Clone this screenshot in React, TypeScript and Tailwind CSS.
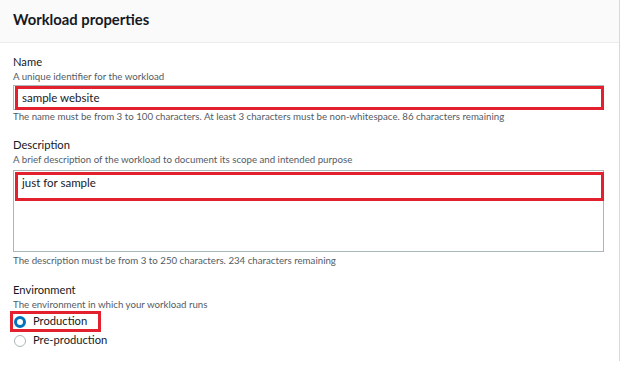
const Radio = ({ checked }: { checked?: boolean }) =>
  checked ? (
    <span className="inline-block h-[12px] w-[12px] rounded-full border-[3.5px] border-[#0073bb] bg-white" />
  ) : (
    <span className="inline-block h-[12px] w-[12px] rounded-full border border-[#aab7b8] bg-white" />
  );

const Hint = ({ children }: { children: React.ReactNode }) => (
  <div className="text-[9.7px] leading-[13px] text-[#545b64]">{children}</div>
);

const Label = ({ children }: { children: React.ReactNode }) => (
  <div className="text-[11.2px] leading-[16px] text-[#16191f]">{children}</div>
);

export default function App() {
  return (
    <div className="h-[387px] w-[621px] bg-white font-['Lato',sans-serif]">
      <div className="h-[361px] w-[620px] border-r border-[#d5dbdb]">
        <div className="flex h-[43px] items-center border-b border-[#eaeded] bg-[#fafafa] px-[13px]">
          <h2 className="pb-[4px] text-[14.8px] font-bold text-[#16191f]">Workload properties</h2>
        </div>

        <div className="px-[13px] pt-[11px]">
          {/* name */}
          <Label>Name</Label>
          <Hint>A unique identifier for the workload</Hint>
          <div className="relative mt-[2px] flex h-[25px] w-[591px] items-center border border-[#aab7b8] px-[8px] text-[11.5px] text-[#16191f]">
            sample website
            <div className="absolute left-[1px] top-[0px] h-[24px] w-[589px] border-[3px] border-[#e2202e]" />
          </div>
          <Hint>
            The name must be from 3 to 100 characters. At least 3 characters must be non-whitespace. 86 characters
            remaining
          </Hint>

          {/* description */}
          <div className="mt-[14px]">
            <Label>Description</Label>
          </div>
          <Hint>A brief description of the workload to document its scope and intended purpose</Hint>
          <div className="relative mt-[4px] h-[82px] w-[591px] border border-[#aab7b8] px-[8px] pt-[4px] text-[11.5px] leading-[16px] text-[#16191f]">
            just for sample
            <div className="absolute left-[1px] top-[1px] h-[29px] w-[589px] border-[3px] border-[#e2202e]" />
          </div>
          <div className="mt-[2px]">
            <Hint>The description must be from 3 to 250 characters. 234 characters remaining</Hint>
          </div>

          {/* environment */}
          <div className="mt-[15px]">
            <Label>Environment</Label>
          </div>
          <Hint>The environment in which your workload runs</Hint>
          <div className="mt-[1px] flex flex-col">
            <div className="relative flex h-[19px] items-center gap-[7px] pl-[1px] text-[11.2px] text-[#16191f]">
              <Radio checked />
              Production
              <div className="absolute -left-[3px] -top-[1px] h-[21px] w-[91px] border-[3px] border-[#e2202e]" />
            </div>
            <div className="flex h-[19px] items-center gap-[7px] pl-[1px] text-[11.2px] text-[#16191f]">
              <Radio />
              Pre-production
            </div>
          </div>
        </div>
      </div>
    </div>
  );
}
